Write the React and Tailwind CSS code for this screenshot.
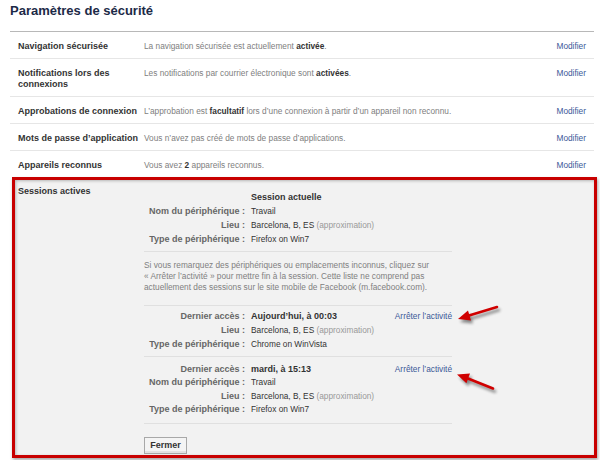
const rows = [
  {
    label: "Navigation sécurisée",
    value: (
      <>
        La navigation sécurisée est actuellement <b className="text-[#333] font-bold">activée</b>.
      </>
    ),
  },
  {
    label: (
      <>
        Notifications lors des
        <br />
        connexions
      </>
    ),
    value: (
      <>
        Les notifications par courrier électronique sont <b className="text-[#333] font-bold">activées</b>.
      </>
    ),
  },
  {
    label: "Approbations de connexion",
    value: (
      <>
        L’approbation est <b className="text-[#333] font-bold">facultatif</b> lors d’une connexion à partir d’un appareil non reconnu.
      </>
    ),
  },
  {
    label: "Mots de passe d’application",
    value: <>Vous n’avez pas créé de mots de passe d’applications.</>,
  },
  {
    label: "Appareils reconnus",
    value: (
      <>
        Vous avez <b className="text-[#333] font-bold">2</b> appareils reconnus.
      </>
    ),
  },
];

function KV({ label, children, link, h = "h-[14px] leading-[14px]" }) {
  return (
    <div className={`flex items-center ${h}`}>
      <div className="w-[101px] shrink-0 text-right text-[9px] font-bold text-[#666] whitespace-nowrap">{label}</div>
      <div className="ml-[6px] text-[8.3px] text-[#333] whitespace-nowrap">{children}</div>
      {link && <div className="ml-auto text-[8.3px] text-[#3b5998] whitespace-nowrap">Arrêter l’activité</div>}
    </div>
  );
}

const Approx = () => <span className="text-[#999]"> (approximation)</span>;

export default function App() {
  return (
    <div className="relative w-[600px] h-[460px] overflow-hidden bg-white font-['Liberation_Sans',Arial,sans-serif] text-[#333]">
      <h1 className="pl-[10px] pt-[3px] text-[13px] leading-[16px] font-bold text-[#1c2a47]">Paramètres de sécurité</h1>

      <div className="ml-[10px] mt-[12px] w-[584px] border-t border-[#b8b8b8]">
        {rows.map((r, i) => (
          <div
            key={i}
            className={`flex items-start px-[8px] pt-[8.5px] pb-[6.5px] leading-[11px] ${i < rows.length - 1 ? "border-b border-[#e6e6e6]" : ""}`}
          >
            <div className="w-[126px] shrink-0 text-[9px] font-bold text-[#333] whitespace-nowrap">{r.label}</div>
            <div className="flex-1 text-[8.3px] text-[#808080] whitespace-nowrap">{r.value}</div>
            <div className="text-[8.3px] text-[#3b5998]">Modifier</div>
          </div>
        ))}
      </div>

      <div className="ml-[12px] w-[585px] h-[281px] border-[3px] border-[#c80000] bg-[#f2f2f2] shadow-[1px_2px_3px_rgba(0,0,0,0.35),inset_1px_1px_3px_rgba(0,0,0,0.25)] flex">
        <div className="w-[129px] shrink-0 pl-[3px] pt-[5.5px] text-[9px] font-bold leading-[11px] text-[#333]">Sessions actives</div>
        <div className="w-[308px] pt-[10px] flex flex-col">
          <div className="h-[14px] leading-[14px] pl-[107px] text-[9px] font-bold text-[#333]">Session actuelle</div>
          <KV label="Nom du périphérique :">Travail</KV>
          <KV label="Lieu :">
            Barcelona, B, ES<Approx />
          </KV>
          <KV label="Type de périphérique :">Firefox on Win7</KV>

          <div className="mt-[5px] h-[2px] bg-[#e0e0e0]" />

          <p className="mt-[8px] text-[8.3px] leading-[11.2px] text-[#808080] whitespace-nowrap">
            Si vous remarquez des périphériques ou emplacements inconnus, cliquez sur
            <br />« Arrêter l’activité » pour mettre fin à la session. Cette liste ne comprend pas
            <br />
            actuellement des sessions sur le site mobile de Facebook (m.facebook.com).
          </p>

          <div className="mt-[11.5px] h-[2px] bg-[#e0e0e0]" />

          <div className="mt-[3.2px]">
            <KV label="Dernier accès :" link>
              <b className="font-bold text-[9px]">Aujourd’hui, à 00:03</b>
            </KV>
            <KV label="Lieu :">
              Barcelona, B, ES<Approx />
            </KV>
            <KV label="Type de périphérique :">Chrome on WinVista</KV>
          </div>

          <div className="mt-[5px] h-[2px] bg-[#e0e0e0]" />

          <div className="mt-[5.6px]">
            <KV label="Dernier accès :" link h="h-[13.5px] leading-[13.5px]">
              <b className="font-bold text-[9px]">mardi, à 15:13</b>
            </KV>
            <KV label="Nom du périphérique :" h="h-[13.5px] leading-[13.5px]">Travail</KV>
            <KV label="Lieu :" h="h-[13.5px] leading-[13.5px]">
              Barcelona, B, ES<Approx />
            </KV>
            <KV label="Type de périphérique :" h="h-[13.5px] leading-[13.5px]">Firefox on Win7</KV>
          </div>

          <div className="mt-[6.3px] h-[2px] bg-[#e0e0e0]" />

          <div className="mt-[7px]">
            <button className="w-[43px] h-[17px] border border-[#a8a8a8] bg-[#f4f4f4] text-[9px] font-bold text-[#333] leading-[15px] shadow-[inset_0_-2px_0_#e2e2e2]">
              Fermer
            </button>
          </div>
        </div>
      </div>

      <svg className="absolute inset-0 pointer-events-none" width="600" height="460" viewBox="0 0 600 460">
        <defs>
          <filter id="sh" x="-20%" y="-20%" width="140%" height="140%">
            <feGaussianBlur stdDeviation="1.6" />
          </filter>
        </defs>
        <g transform="translate(2,3)" filter="url(#sh)" opacity="0.45">
          <line x1="497" y1="307" x2="469" y2="315.5" stroke="#000" strokeWidth="2.6" strokeLinecap="round" />
          <polygon points="458,319 471,320.5 468,310.5" fill="#000" />
          <line x1="493" y1="388.5" x2="468" y2="378.5" stroke="#000" strokeWidth="2.6" strokeLinecap="round" />
          <polygon points="457,374.5 470,373.5 466.4,383.3" fill="#000" />
        </g>
        <g>
          <line x1="497" y1="307" x2="469" y2="315.5" stroke="#d00000" strokeWidth="2.6" strokeLinecap="round" />
          <polygon points="458,319 471,320.5 468,310.5" fill="#d00000" />
          <line x1="493" y1="388.5" x2="468" y2="378.5" stroke="#d00000" strokeWidth="2.6" strokeLinecap="round" />
          <polygon points="457,374.5 470,373.5 466.4,383.3" fill="#d00000" />
        </g>
      </svg>
    </div>
  );
}
